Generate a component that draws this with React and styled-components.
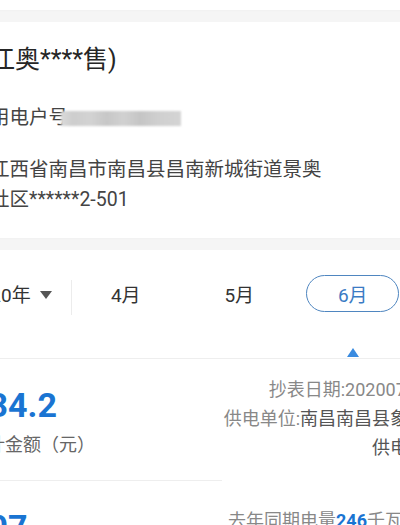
import React from "react";
import styled, { createGlobalStyle } from "styled-components";

const GlobalStyle = createGlobalStyle`
  html, body { margin: 0; padding: 0; background: #fff; overflow: hidden; }
  body { font-family: Roboto, "Noto Sans CJK SC", sans-serif; color: #333; }
  * { box-sizing: border-box; }
`;

const Screen = styled.div`
  width: 462px;
  margin-left: -31px;
  background: #fff;
`;

const TopStrip = styled.div`
  height: 10px;
  background: #fff;
`;

const Gap = styled.div`
  height: 12px;
  background: #f5f5f5;
  box-shadow: inset 0 1px 2px rgba(0, 0, 0, 0.02);
`;

const InfoCard = styled.section`
  padding: 22px 0 23px 21px;
  background: #fff;
`;

const Title = styled.h1`
  margin: 0;
  font-size: 25px;
  line-height: 32px;
  font-weight: 400;
  color: #262626;
  white-space: nowrap;
`;

const Field = styled.div`
  margin-top: 27px;
  font-size: 19.5px;
  line-height: 30px;
  color: #444;
  white-space: nowrap;
  display: flex;
  align-items: center;
`;

const Masked = styled.span`
  display: inline-block;
  width: 120px;
  height: 15px;
  margin-left: -7px;
  background: linear-gradient(
    90deg,
    #dadada 0%,
    #cdcdcd 10%,
    #d3d3d3 24%,
    #c7c7c7 38%,
    #d1d1d1 52%,
    #c5c5c5 66%,
    #cfcfcf 80%,
    #d4d4d4 100%
  );
  filter: blur(1px);
`;

const Address = styled.div`
  margin-top: 22px;
  font-size: 19.5px;
  line-height: 30px;
  color: #444;
`;

const AddressLine = styled.div`
  white-space: nowrap;
`;

const Tabs = styled.nav`
  display: flex;
  height: 109px;
  border-bottom: 1px solid #eeeeee;
`;

const YearCell = styled.div`
  width: 102px;
  height: 37px;
  margin-top: 25px;
  display: flex;
  align-items: center;
  font-size: 19px;
  color: #333;
  white-space: nowrap;
`;

const Caret = styled.svg`
  margin-left: 9px;
  margin-top: 2px;
`;

const Divider = styled.div`
  width: 1px;
  height: 35px;
  margin-top: 30px;
  background: #ececec;
`;

const MonthList = styled.div`
  display: flex;
  margin-left: -3px;
`;

const MonthCell = styled.div`
  width: 113.5px;
  display: flex;
  flex-direction: column;
  align-items: center;
`;

const MonthLabel = styled.div`
  width: 93px;
  height: 37px;
  margin-top: 25px;
  border-radius: 19px;
  border: 1.5px solid ${(p) => (p.$active ? "#4f86c0" : "transparent")};
  color: ${(p) => (p.$active ? "#3b7bc4" : "#333")};
  display: flex;
  align-items: center;
  justify-content: center;
  font-size: 19px;
`;

const Indicator = styled.svg`
  margin-top: auto;
  margin-bottom: 1px;
`;

const DetailRow = styled.div`
  display: flex;
`;

const LeftCol = styled.div`
  width: 253px;
  padding: 26px 0 22px;
  border-bottom: 1px solid ${(p) => (p.$divided ? "#eeeeee" : "transparent")};
`;

const Value = styled.div`
  font-family: Roboto, sans-serif;
  font-size: 34px;
  font-weight: 700;
  line-height: 40px;
  color: #1a74d2;
`;

const ValueLabel = styled.div`
  margin-top: 7px;
  font-size: 18px;
  line-height: 26px;
  color: #666;
  white-space: nowrap;
`;

const RightCol = styled.div`
  flex: 1;
  text-align: right;
  padding-top: ${(p) => p.$top}px;
  padding-right: ${(p) => p.$right}px;
`;

const InfoLine = styled.div`
  font-size: 18px;
  line-height: 29px;
  color: #888;
  white-space: nowrap;
`;

const Dark = styled.span`
  color: #555;
`;

const Blue = styled.span`
  color: #1a74d2;
  font-weight: 700;
`;

const months = ["4月", "5月", "6月"];

export default function App() {
  return (
    <>
      <GlobalStyle />
      <Screen>
        <TopStrip />
        <Gap />
        <InfoCard>
          <Title>江奥****售)</Title>
          <Field>
            用电户号
            <Masked />
          </Field>
          <Address>
            <AddressLine>江西省南昌市南昌县昌南新城街道景奥</AddressLine>
            <AddressLine>社区******2-501</AddressLine>
          </Address>
        </InfoCard>
        <Gap />
        <Tabs>
          <YearCell>
            2020年
            <Caret width="12" height="8" viewBox="0 0 12 8">
              <path d="M0 0 H12 L6 8 Z" fill="#555" />
            </Caret>
          </YearCell>
          <Divider />
          <MonthList>
            {months.map((m, i) => {
              const active = i === months.length - 1;
              return (
                <MonthCell key={m}>
                  <MonthLabel $active={active}>{m}</MonthLabel>
                  {active && (
                    <Indicator width="12" height="9" viewBox="0 0 12 9">
                      <path d="M6 0 L12 9 H0 Z" fill="#3a8be0" />
                    </Indicator>
                  )}
                </MonthCell>
              );
            })}
          </MonthList>
        </Tabs>
        <DetailRow>
          <LeftCol $divided>
            <Value>134.2</Value>
            <ValueLabel>合计金额（元）</ValueLabel>
          </LeftCol>
          <RightCol $top={16} $right={5}>
            <InfoLine>抄表日期:20200701</InfoLine>
            <InfoLine>
              供电单位:<Dark>南昌南昌县象湖</Dark>
            </InfoLine>
            <InfoLine>
              <Dark>供电所</Dark>
            </InfoLine>
          </RightCol>
        </DetailRow>
        <DetailRow>
          <LeftCol>
            <Value>207</Value>
            <ValueLabel>用电量（千瓦时）</ValueLabel>
          </LeftCol>
          <RightCol $top={25} $right={10}>
            <InfoLine>
              去年同期电量<Blue>246</Blue>千瓦时
            </InfoLine>
          </RightCol>
        </DetailRow>
      </Screen>
    </>
  );
}
